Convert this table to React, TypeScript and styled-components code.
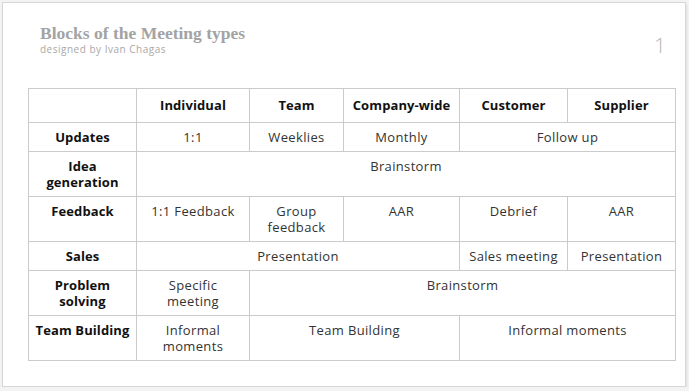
import React from 'react';
import styled, { createGlobalStyle } from 'styled-components';

const GlobalStyle = createGlobalStyle`
  html, body {
    margin: 0;
    padding: 0;
    background: #f3f3f3;
  }
`;

const Slide = styled.div`
  box-sizing: border-box;
  margin: 2px 0 0 2px;
  width: 684px;
  height: 385px;
  background: #ffffff;
  border: 1px solid #d6d6d6;
  box-shadow: 1px 2px 2px rgba(0, 0, 0, 0.08);
  padding: 20px 12px 0 25px;
  display: flex;
  flex-direction: column;
`;

const Header = styled.div`
  display: flex;
  justify-content: space-between;
  align-items: flex-start;
  padding-left: 12px;
  height: 65px;
`;

const TitleBlock = styled.div`
  display: flex;
  flex-direction: column;
`;

const Title = styled.h1`
  margin: 0;
  font-family: "Liberation Serif", serif;
  font-size: 17.5px;
  font-weight: 700;
  color: #a3a3a3;
  line-height: 21px;
`;

const Subtitle = styled.div`
  font-family: "Open Sans", sans-serif;
  font-size: 10px;
  color: #a8a8a8;
  line-height: 11px;
  letter-spacing: 0.5px;
`;

const PageNumber = styled.div`
  font-family: "Open Sans", sans-serif;
  font-size: 21px;
  font-weight: 300;
  color: #b5b5b5;
  margin-top: 8px;
  margin-right: 7px;
`;

const Table = styled.table`
  border-collapse: collapse;
  table-layout: fixed;
  width: 647px;
  font-family: "Open Sans", sans-serif;
  font-size: 13px;
  line-height: 16px;
  color: #333;
`;

const Cell = styled.td<{ $head?: boolean; $label?: boolean }>`
  border: 1px solid #cbcbcb;
  text-align: center;
  vertical-align: top;
  padding: ${p => (p.$head ? '8px 4px 9px' : '6px 4px 6px')};
  font-weight: ${p => (p.$head || p.$label ? 700 : 400)};
  color: ${p => (p.$head || p.$label ? '#111' : '#333')};
  letter-spacing: ${p => (p.$head || p.$label ? '0.1px' : '0.35px')};
`;

const widths = [108, 113, 94, 116, 108, 108];

type Row = { label: string; cells: { text: string; span?: number }[] };

const rows: Row[] = [
  { label: 'Updates', cells: [{ text: '1:1' }, { text: 'Weeklies' }, { text: 'Monthly' }, { text: 'Follow up', span: 2 }] },
  { label: 'Idea generation', cells: [{ text: 'Brainstorm', span: 5 }] },
  { label: 'Feedback', cells: [{ text: '1:1 Feedback' }, { text: 'Group feedback' }, { text: 'AAR' }, { text: 'Debrief' }, { text: 'AAR' }] },
  { label: 'Sales', cells: [{ text: 'Presentation', span: 3 }, { text: 'Sales meeting' }, { text: 'Presentation' }] },
  { label: 'Problem solving', cells: [{ text: 'Specific meeting' }, { text: 'Brainstorm', span: 4 }] },
  { label: 'Team Building', cells: [{ text: 'Informal moments' }, { text: 'Team Building', span: 2 }, { text: 'Informal moments', span: 2 }] },
];

const heads = ['', 'Individual', 'Team', 'Company-wide', 'Customer', 'Supplier'];

export default function App() {
  return (
    <>
      <GlobalStyle />
      <Slide>
        <Header>
          <TitleBlock>
            <Title>Blocks of the Meeting types</Title>
            <Subtitle>designed by Ivan Chagas</Subtitle>
          </TitleBlock>
          <PageNumber>1</PageNumber>
        </Header>
        <Table>
          <colgroup>
            {widths.map((w, i) => (
              <col key={i} style={{ width: w }} />
            ))}
          </colgroup>
          <thead>
            <tr>
              {heads.map((h, i) => (
                <Cell as="th" $head key={i}>{h}</Cell>
              ))}
            </tr>
          </thead>
          <tbody>
            {rows.map(r => (
              <tr key={r.label}>
                <Cell $label>{r.label}</Cell>
                {r.cells.map((c, i) => (
                  <Cell key={i} colSpan={c.span}>{c.text}</Cell>
                ))}
              </tr>
            ))}
          </tbody>
        </Table>
      </Slide>
    </>
  );
}
